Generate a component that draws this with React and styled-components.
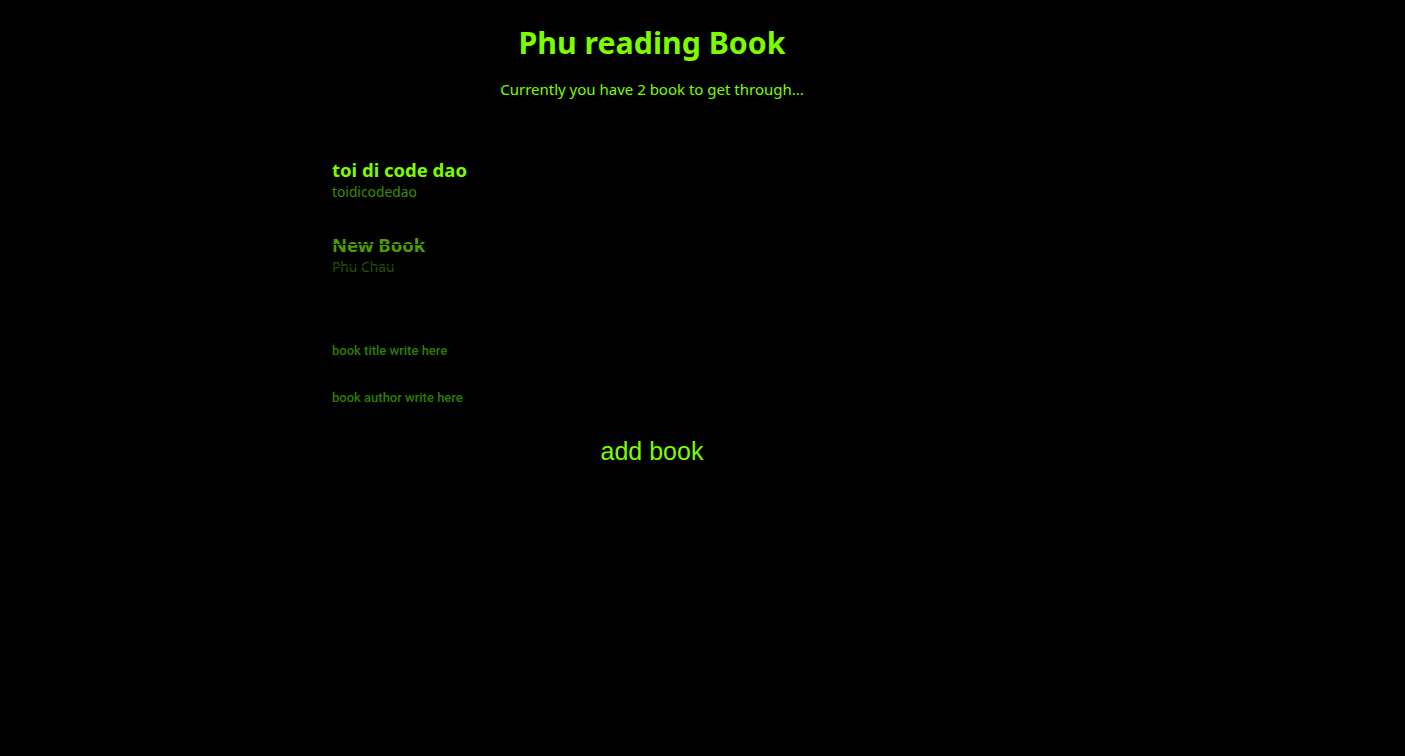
import React from "react";
import styled, { createGlobalStyle } from "styled-components";

const Global = createGlobalStyle`
  html, body { margin: 0; padding: 0; background: #000; }
  body { font-family: "Noto Sans", "Open Sans", sans-serif; min-height: 756px; }
`;

const Page = styled.div`
  width: 640px;
  margin-left: 332px;
  padding-top: 22px;
`;

const Title = styled.h1`
  margin: 0;
  text-align: center;
  color: #7cfc00;
  font-size: 30.3px;
  font-weight: 700;
  line-height: 42px;
`;

const Subtitle = styled.p`
  margin: 15px 0 0;
  text-align: center;
  color: #7cfc00;
  font-size: 15px;
  line-height: 20px;
`;

const List = styled.ul`
  list-style: none;
  margin: 58px 0 0;
  padding: 0;
  display: flex;
  flex-direction: column;
  gap: 30px;
`;

const Item = styled.li`
  display: flex;
  flex-direction: column;
  text-decoration: ${(p) => (p.$done ? "line-through" : "none")};
  opacity: ${(p) => (p.$done ? 0.62 : 1)};
  cursor: pointer;
`;

const BookTitle = styled.span`
  color: #7cfc00;
  font-size: 18.5px;
  font-weight: 700;
  line-height: 25px;
`;

const BookAuthor = styled.span`
  color: #3f8c00;
  font-size: 13.8px;
  line-height: 20px;
`;

const Form = styled.form`
  margin-top: 65px;
  display: flex;
  flex-direction: column;
  align-items: stretch;
`;

const Input = styled.input`
  background: transparent;
  border: none;
  outline: none;
  padding: 0;
  margin: 0 0 31px;
  height: 16px;
  font-family: Roboto, "Liberation Sans", sans-serif;
  font-size: 13px;
  font-weight: 500;
  color: #7cfc00;
  &::placeholder { color: #2e7d00; opacity: 1; }
`;

const Button = styled.button`
  align-self: center;
  margin-top: 1px;
  background: transparent;
  border: none;
  padding: 0;
  color: #7cfc00;
  font-family: "Liberation Sans", Arial, sans-serif;
  font-size: 25px;
  line-height: 28px;
  cursor: pointer;
`;

const books = [
  { title: "toi di code dao", author: "toidicodedao", done: false },
  { title: "New Book", author: "Phu Chau", done: true },
];

export default function App() {
  return (
    <>
      <Global />
      <Page>
        <Title>Phu reading Book</Title>
        <Subtitle>Currently you have 2 book to get through...</Subtitle>
        <List>
          {books.map((b) => (
            <Item key={b.title} $done={b.done}>
              <BookTitle>{b.title}</BookTitle>
              <BookAuthor>{b.author}</BookAuthor>
            </Item>
          ))}
        </List>
        <Form onSubmit={(e) => e.preventDefault()}>
          <Input placeholder="book title write here" />
          <Input placeholder="book author write here" />
          <Button type="submit">add book</Button>
        </Form>
      </Page>
    </>
  );
}
